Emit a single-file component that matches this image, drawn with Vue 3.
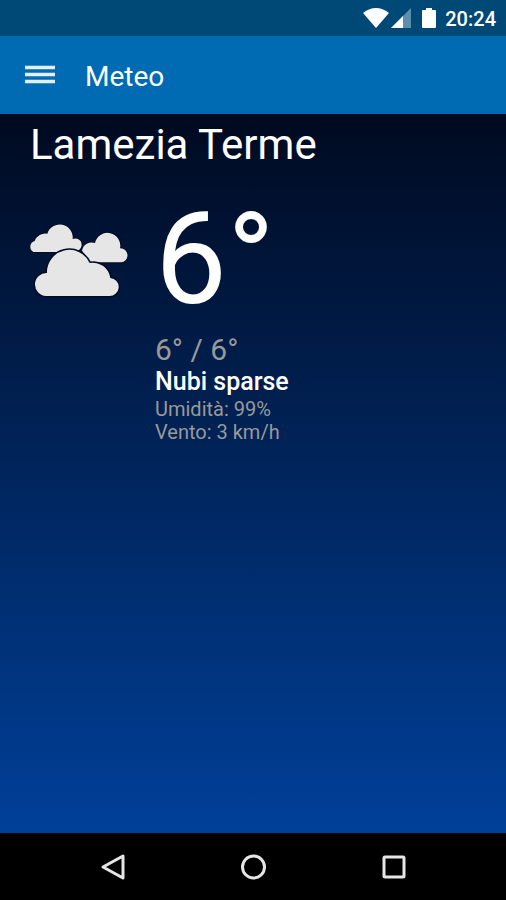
<template>
    <div class="screen">
        <div class="status-bar">
            <svg class="wifi" viewBox="0 0 26 20" aria-hidden="true">
                <path d="M0 5Q13-5 26 5L13 20Z" fill="#fff" />
            </svg>
            <svg class="signal" viewBox="0 0 20 20" aria-hidden="true">
                <path d="M20 0V20H0Z" fill="#5c8eae" />
                <path d="M12 8V20H0Z" fill="#fff" />
            </svg>
            <svg class="battery" viewBox="0 0 14 20" aria-hidden="true">
                <path d="M4 0H10V2H13Q14 2 14 3V19Q14 20 13 20H1Q0 20 0 19V3Q0 2 1 2H4Z" fill="#fff" />
            </svg>
            <span class="clock">20:24</span>
        </div>

        <header class="toolbar">
            <button class="menu-btn" type="button" aria-label="Menu" @click="toggleMenu">
                <svg viewBox="0 0 30 20" aria-hidden="true">
                    <path d="M0 2.5H30M0 9.5H30M0 16.5H30" stroke="#e4eefa" stroke-width="3.4" />
                </svg>
            </button>
            <h1>Meteo</h1>
        </header>

        <main class="weather">
            <h2>{{ weather.city }}</h2>
            <div class="current">
                <svg class="clouds" viewBox="30 69 294 228" aria-hidden="true">
                    <g fill="#e6e6e6" stroke="#020b24" stroke-width="5" paint-order="stroke">
                        <path d="M40 156A18 18 0 0 1 44 123A34 34 0 0 1 82 101A39 39 0 0 1 158 117A19 19 0 0 1 178 149L160 156Z" />
                        <path d="M186 152A30 30 0 0 1 225 129A38 38 0 0 1 300 145A21 21 0 0 1 303 187H212Z" />
                        <path d="M78 288A34 34 0 0 1 81 219A67 67 0 0 1 209 189A53 53 0 0 1 271 234A27 27 0 0 1 267 288Z" stroke-width="9" />
                    </g>
                </svg>
                <div class="details">
                    <p class="temp">{{ weather.temp }}°</p>
                    <p class="range">{{ weather.max }}° / {{ weather.min }}°</p>
                    <p class="condition">{{ weather.condition }}</p>
                    <p class="extra">Umidità: {{ weather.humidity }}%</p>
                    <p class="extra">Vento: {{ weather.wind }} km/h</p>
                </div>
            </div>
        </main>

        <nav class="nav-bar">
            <button type="button" aria-label="Indietro">
                <svg viewBox="0 0 28 28" aria-hidden="true">
                    <path d="M5 14L25 3V25Z" />
                </svg>
            </button>
            <button type="button" aria-label="Home">
                <svg viewBox="0 0 28 28" aria-hidden="true">
                    <circle cx="14.5" cy="14" r="11" />
                </svg>
            </button>
            <button type="button" aria-label="Recenti">
                <svg viewBox="0 0 28 28" aria-hidden="true">
                    <rect x="4" y="4" width="20" height="20" rx="1" />
                </svg>
            </button>
        </nav>
    </div>
</template>


<script setup>
import { ref, reactive } from 'vue';

const menuOpen = ref(false);

const weather = reactive({
    city: 'Lamezia Terme',
    temp: 6,
    max: 6,
    min: 6,
    condition: 'Nubi sparse',
    humidity: 99,
    wind: 3
});

function toggleMenu() {
    menuOpen.value = !menuOpen.value;
}
</script>


<style>
body {
    margin: 0;
    background: #000;
}
</style>

<style scoped>
.screen {
    display: flex;
    flex-direction: column;
    min-height: 100vh;
    font-family: Roboto, "Liberation Sans", sans-serif;
    color: #fff;
}

h1,
h2,
p {
    margin: 0;
    font-weight: 400;
}

button {
    display: flex;
    padding: 0;
    border: 0;
    background: none;
    cursor: pointer;
}

.status-bar {
    display: flex;
    align-items: center;
    justify-content: flex-end;
    height: 36px;
    padding-right: 10px;
    background: #004876;
}

.wifi {
    width: 26px;
    height: 20px;
}

.signal {
    width: 20px;
    height: 20px;
    margin: 0 11px 0 2px;
}

.battery {
    width: 14px;
    height: 20px;
    margin-right: 9px;
}

.clock {
    padding-top: 2px;
    font-size: 20px;
    font-weight: 500;
}

.toolbar {
    display: flex;
    align-items: center;
    gap: 30px;
    height: 78px;
    padding: 0 25px;
    background: #006bb3;
}

.menu-btn svg {
    width: 30px;
    height: 20px;
}

h1 {
    padding-top: 4px;
    font-size: 28px;
    line-height: 32px;
}

.weather {
    flex: 1;
    padding: 6px 30px 0;
    background: linear-gradient(#000a20, #004099);
}

h2 {
    font-size: 42px;
    line-height: 50px;
}

.current {
    display: flex;
    align-items: flex-start;
    gap: 27px;
    padding-top: 14px;
}

.clouds {
    flex: none;
    width: 98px;
    height: 76px;
    margin-top: 39px;
    overflow: visible;
}

.temp {
    font-size: 128px;
    line-height: 150px;
}

.range {
    font-size: 30px;
    line-height: 32px;
    color: #999;
}

.condition {
    font-size: 25px;
    font-weight: 500;
    line-height: 32px;
}

.extra {
    font-size: 20px;
    line-height: 23px;
    color: #999;
}

.nav-bar {
    display: flex;
    align-items: center;
    justify-content: space-between;
    height: 67px;
    padding: 0 98px;
    background: #000;
}

.nav-bar svg {
    width: 28px;
    height: 28px;
    fill: none;
    stroke: #e6e6e6;
    stroke-width: 3;
    stroke-linejoin: round;
}
</style>
